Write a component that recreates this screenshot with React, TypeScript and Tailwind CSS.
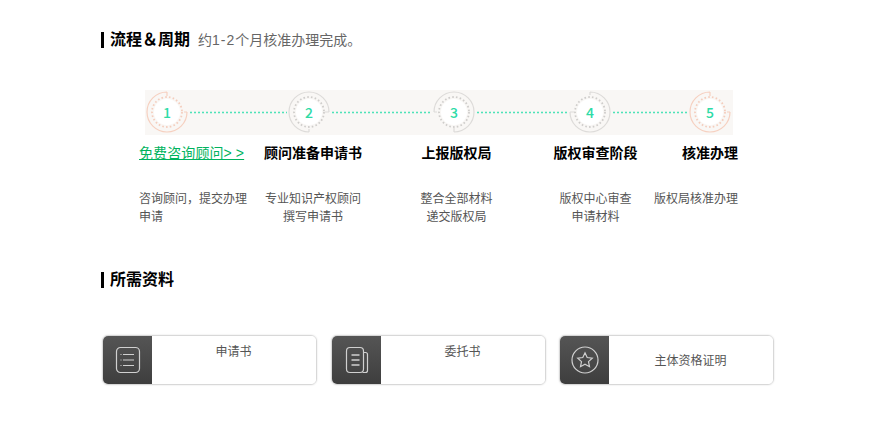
const FONT = "font-['Liberation_Sans','Noto_Sans_CJK_SC',sans-serif]";

const steps = [
  { n: 1, rotate: 0, warm: true, line: 'w-[98px]' },
  { n: 2, rotate: 90, warm: false, line: 'w-[101px]' },
  { n: 3, rotate: 180, warm: false, line: 'w-[92px]' },
  { n: 4, rotate: 270, warm: false, line: 'w-[76px]' },
  { n: 5, rotate: 0, warm: true, line: '' },
];

const labels = [
  { title: '顾问准备申请书', lines: ['专业知识产权顾问', '撰写申请书'], align: 'text-center' },
  { title: '上报版权局', lines: ['整合全部材料', '递交版权局'], align: 'text-center' },
  { title: '版权审查阶段', lines: ['版权中心审查', '申请材料'], align: 'text-center' },
  { title: '核准办理', lines: ['版权局核准办理'], align: 'text-right' },
];

function Ring({ n, rotate, warm }: { n: number; rotate: number; warm: boolean }) {
  const outer = warm ? '#f6d0c0' : '#dddbd9';
  const dots = warm ? '#f4cdbd' : '#cfcdcb';
  return (
    <div className="relative h-[44px] w-[44px] shrink-0">
      <svg width="44" height="44" viewBox="0 0 44 44" fill="none">
        <path
          d="M22 2A20 20 0 1 0 42 22M22 2v4M42 22h-3"
          stroke={outer}
          strokeWidth="1.2"
          transform={`rotate(${rotate} 22 22)`}
        />
        <circle cx="22" cy="22" r="15" stroke={dots} strokeWidth="1.8" strokeDasharray="1.6 2.2" />
        <circle cx="22" cy="22" r="13" fill="#ffffff" />
      </svg>
      <span className="absolute inset-0 flex items-center justify-center font-['Noto_Sans_CJK_SC',sans-serif] text-[14px] leading-none font-medium text-[#2edba6]">
        {n}
      </span>
    </div>
  );
}

function Heading({ children }: { children: React.ReactNode }) {
  return (
    <h2 className="border-l-[3px] border-black pl-[6px] text-[16px] leading-[16px] font-bold text-black">
      {children}
    </h2>
  );
}

function ListIcon() {
  return (
    <svg width="26" height="28" viewBox="0 0 26 28" fill="none" stroke="#d0d0d0" strokeWidth="1.2">
      <rect x="1.5" y="1.5" width="23" height="25" rx="4" />
      <path d="M8 8.5h11M8 14h11M8 19.5h11" />
      <path d="M5.5 8.5h1M5.5 14h1M5.5 19.5h1" />
    </svg>
  );
}

function DocIcon() {
  return (
    <svg width="24" height="28" viewBox="0 0 24 28" fill="none" stroke="#d0d0d0" strokeWidth="1.2">
      <rect x="1.5" y="1.5" width="17" height="25" rx="3.5" />
      <path d="M18.5 6.5h2a2 2 0 0 1 2 2v16a2 2 0 0 1-2 2h-3" />
      <path d="M6.5 9h8M6.5 14h8M6.5 19h8" strokeWidth="1.4" />
    </svg>
  );
}

function StarIcon() {
  return (
    <svg width="28" height="28" viewBox="0 0 28 28" fill="none" stroke="#d0d0d0" strokeWidth="1.2">
      <circle cx="14" cy="14" r="13" />
      <path d="M14 6.8l2.2 4.7 5.1.6-3.8 3.5 1 5.1-4.5-2.5-4.5 2.5 1-5.1-3.8-3.5 5.1-.6z" />
    </svg>
  );
}

function Card({ icon, title, middle }: { icon: React.ReactNode; title: string; middle?: boolean }) {
  return (
    <div className="flex h-[50px] w-[215px] overflow-hidden rounded-[6px] border border-[#d8d8d8] shadow-[0_0_2px_#dddddd]">
      <div className="flex w-[49px] shrink-0 items-center justify-center bg-gradient-to-b from-[#555555] to-[#3e3e3e]">
        {icon}
      </div>
      <div className={`flex flex-1 justify-center bg-white pr-[1px] text-[12px] leading-[16px] text-[#555555] ${middle ? 'items-center pt-[2px]' : 'pt-[8px]'}`}>
        {title}
      </div>
    </div>
  );
}

export default function App() {
  return (
    <div className={`h-[425px] w-[879px] overflow-hidden bg-white pt-[32px] pl-[101px] ${FONT}`}>
      <div className="flex items-center">
        <Heading>流程＆周期</Heading>
        <span className="ml-[8px] text-[14px] leading-[16px] text-[#666666]">
          约<span className="tracking-[1px]">1-2</span>个月核准办理完成。
        </span>
      </div>

      <div className="mt-[42px] ml-[44px] flex h-[45px] w-[588px] items-start bg-[#f9f7f5]">
        {steps.map((s) => (
          <div key={s.n} className="flex items-center">
            <Ring n={s.n} rotate={s.rotate} warm={s.warm} />
            {s.line && (
              <div className={`${s.line} h-[3px] bg-[radial-gradient(circle,#4fe3b8_0.9px,transparent_1.2px)] bg-[length:4px_3px]`} />
            )}
          </div>
        ))}
      </div>

      <div className="ml-[38px] grid w-[599px] grid-cols-[111px_126px_161px_117px_84px]">
        <div className="text-[12px] leading-[18px] text-[#555555]">
          <a className="mt-[8px] block text-[14px] leading-[20px] tracking-[0.1px] text-[#00b35e] underline">免费咨询顾问&gt; &gt;</a>
          <p className="mt-[27px]">咨询顾问，提交办理</p>
          <p>申请</p>
        </div>
        {labels.map((l) => (
          <div key={l.title} className={`text-[12px] leading-[18px] text-[#555555] ${l.align}`}>
            <h3 className="mt-[8px] text-[14px] leading-[20px] font-bold text-black">{l.title}</h3>
            <div className="mt-[27px]">
              {l.lines.map((t) => (
                <p key={t}>{t}</p>
              ))}
            </div>
          </div>
        ))}
      </div>

      <div className="mt-[46px]">
        <Heading>所需资料</Heading>
      </div>

      <div className="mt-[47px] ml-px flex gap-[14px]">
        <Card icon={<ListIcon />} title="申请书" />
        <Card icon={<DocIcon />} title="委托书" />
        <div className="-ml-px">
          <Card icon={<StarIcon />} title="主体资格证明" middle />
        </div>
      </div>
    </div>
  );
}
